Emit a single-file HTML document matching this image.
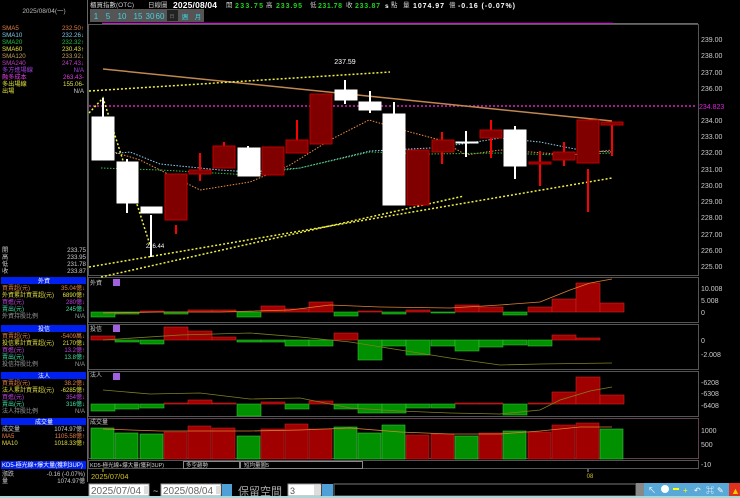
<!DOCTYPE html>
<html><head><meta charset="utf-8"><style>
html,body{margin:0;padding:0;background:#000;width:740px;height:498px;overflow:hidden}
svg{display:block}
text{font-family:"Liberation Sans","Noto Sans CJK TC",sans-serif}
</style></head><body>
<svg width="740" height="498" viewBox="0 0 740 498" xmlns="http://www.w3.org/2000/svg">
<rect width="740" height="498" fill="#000"/>
<!-- left panel -->
<line x1="87.5" y1="0" x2="87.5" y2="482" stroke="#666"/>
<text x="44" y="13" fill="#bbb" font-size="6.5" text-anchor="middle">2025/08/04(一)</text>
<g font-size="6.2">
<text x="2" y="30" fill="#e08040">SMA5</text><text x="84" y="30" fill="#e08040" text-anchor="end">232.50↑</text>
<text x="2" y="37" fill="#80c8e8">SMA10</text><text x="84" y="37" fill="#80c8e8" text-anchor="end">232.26↓</text>
<text x="2" y="44" fill="#20c040">SMA20</text><text x="84" y="44" fill="#20c040" text-anchor="end">232.32↑</text>
<text x="2" y="51" fill="#e0e040">SMA60</text><text x="84" y="51" fill="#e0e040" text-anchor="end">230.43↑</text>
<text x="2" y="58" fill="#c0a060">SMA120</text><text x="84" y="58" fill="#c0a060" text-anchor="end">233.92↓</text>
<text x="2" y="65" fill="#c040c0">SMA240</text><text x="84" y="65" fill="#c040c0" text-anchor="end">247.43↓</text>
<text x="2" y="72" fill="#a040e0">多方進場線</text><text x="84" y="72" fill="#a040e0" text-anchor="end">N/A</text>
<text x="2" y="79" fill="#e040e0">融多成本</text><text x="84" y="79" fill="#e040e0" text-anchor="end">263.43-</text>
<text x="2" y="86" fill="#e0e040">多出場線</text><text x="84" y="86" fill="#e0e040" text-anchor="end">155.06-</text>
<text x="2" y="93" fill="#e0e040">出場</text><text x="84" y="93" fill="#ccc" text-anchor="end">N/A</text>
<text x="2" y="252" fill="#ccc">開</text><text x="86" y="252" fill="#ccc" text-anchor="end">233.75</text>
<text x="2" y="259" fill="#ccc">高</text><text x="86" y="259" fill="#ccc" text-anchor="end">233.95</text>
<text x="2" y="266" fill="#ccc">低</text><text x="86" y="266" fill="#ccc" text-anchor="end">231.78</text>
<text x="2" y="273" fill="#ccc">收</text><text x="86" y="273" fill="#ccc" text-anchor="end">233.87</text>
</g>
<g font-size="6">
<rect x="1" y="277" width="85" height="7" fill="#0020f0"/><text x="44" y="283" fill="#fff" text-anchor="middle">外資</text>
<text x="2" y="290" fill="#e08040">買賣超(元)</text><text x="85" y="290" fill="#e08040" text-anchor="end">35.04億↓</text>
<text x="2" y="297" fill="#e0e040">外資累計買賣超(元)</text><text x="85" y="297" fill="#e0e040" text-anchor="end">6890億↑</text>
<text x="2" y="304" fill="#c040e0">買進(元)</text><text x="85" y="304" fill="#c040e0" text-anchor="end">280億↓</text>
<text x="2" y="311" fill="#40e0a0">賣出(元)</text><text x="85" y="311" fill="#40e0a0" text-anchor="end">245億↓</text>
<text x="2" y="318" fill="#999">外資持股比例</text><text x="85" y="318" fill="#999" text-anchor="end">N/A</text>
<rect x="1" y="325" width="85" height="7" fill="#0020f0"/><text x="44" y="331" fill="#fff" text-anchor="middle">投信</text>
<text x="2" y="338" fill="#e08040">買賣超(元)</text><text x="85" y="338" fill="#e08040" text-anchor="end">-5409萬↓</text>
<text x="2" y="345" fill="#e0e040">投信累計買賣超(元)</text><text x="85" y="345" fill="#e0e040" text-anchor="end">2170億↓</text>
<text x="2" y="352" fill="#c040e0">買進(元)</text><text x="85" y="352" fill="#c040e0" text-anchor="end">13.2億↑</text>
<text x="2" y="359" fill="#40e0a0">賣出(元)</text><text x="85" y="359" fill="#40e0a0" text-anchor="end">13.8億↑</text>
<text x="2" y="366" fill="#999">投信持股比例</text><text x="85" y="366" fill="#999" text-anchor="end">N/A</text>
<rect x="1" y="372" width="85" height="7" fill="#0020f0"/><text x="44" y="378" fill="#fff" text-anchor="middle">法人</text>
<text x="2" y="385" fill="#e08040">買賣超(元)</text><text x="85" y="385" fill="#e08040" text-anchor="end">38.2億↓</text>
<text x="2" y="392" fill="#e0e040">法人累計買賣超(元)</text><text x="85" y="392" fill="#e0e040" text-anchor="end">-6285億↑</text>
<text x="2" y="399" fill="#c040e0">買進(元)</text><text x="85" y="399" fill="#c040e0" text-anchor="end">354億↓</text>
<text x="2" y="406" fill="#40e0a0">賣出(元)</text><text x="85" y="406" fill="#40e0a0" text-anchor="end">316億↓</text>
<text x="2" y="413" fill="#999">法人持股比例</text><text x="85" y="413" fill="#999" text-anchor="end">N/A</text>
<rect x="1" y="418" width="85" height="7" fill="#0020f0"/><text x="44" y="424" fill="#fff" text-anchor="middle">成交量</text>
<text x="2" y="431" fill="#ccc">成交量</text><text x="85" y="431" fill="#ccc" text-anchor="end">1074.97億↓</text>
<text x="2" y="438" fill="#e08040">MA5</text><text x="85" y="438" fill="#e08040" text-anchor="end">1105.58億↑</text>
<text x="2" y="445" fill="#e0e040">MA10</text><text x="85" y="445" fill="#e0e040" text-anchor="end">1018.33億↑</text>
<rect x="1" y="461" width="85" height="8" fill="#0020f0"/><text x="2" y="467" fill="#fff">KD5-極光線+爆大量(獲利3UP)</text>
<text x="2" y="476" fill="#ccc">漲跌</text><text x="85" y="476" fill="#ccc" text-anchor="end">-0.16 (-0.07%)</text>
<text x="2" y="483" fill="#ccc">量</text><text x="85" y="483" fill="#ccc" text-anchor="end">1074.97億</text>
</g>
<!-- top bar -->
<g font-size="6.5">
<text x="90" y="7" fill="#ccc">櫃買指數(OTC)</text>
<text x="148" y="7" fill="#ccc">日線圖</text>
<text x="173" y="8" fill="#fff" font-weight="bold" font-size="8.5" textLength="44">2025/08/04</text>
<text x="226" y="7" fill="#ccc">開</text><text x="235" y="8" fill="#20d020" font-weight="bold" font-size="7" textLength="28">233.75</text>
<text x="266" y="7" fill="#ccc">高</text><text x="276" y="8" fill="#20d020" font-weight="bold" font-size="7" textLength="26">233.95</text>
<text x="310" y="7" fill="#ccc">低</text><text x="318" y="8" fill="#20d020" font-weight="bold" font-size="7" textLength="24">231.78</text>
<text x="346" y="7" fill="#ccc">收</text><text x="355" y="8" fill="#20d020" font-weight="bold" font-size="7" textLength="25">233.87</text>
<text x="385" y="8" fill="#fff" font-weight="bold" font-size="6.5">s</text>
<text x="391" y="7" fill="#ccc">點</text><text x="403" y="7" fill="#ccc">量</text>
<text x="413" y="8" fill="#fff" font-weight="bold" font-size="7" textLength="31">1074.97</text>
<text x="449" y="7" fill="#ccc">億</text>
<text x="458" y="8" fill="#fff" font-weight="bold" font-size="7" textLength="57">-0.16 (-0.07%)</text>
</g>
<rect x="90" y="9" width="114" height="13" fill="#555"/>
<g font-size="8" fill="#40d0e0" text-anchor="middle">
<text x="96" y="19">1</text><text x="108" y="19">5</text><text x="122" y="19">10</text><text x="138" y="19">15</text><text x="150" y="19">30</text><text x="160" y="19">60</text>
</g>
<rect x="167" y="10" width="11" height="11" fill="#222"/><text x="172" y="18" fill="#777" font-size="5" text-anchor="middle">日</text>
<text x="185" y="19" fill="#40d0e0" font-size="6.5" text-anchor="middle">週</text><text x="198" y="19" fill="#40d0e0" font-size="6.5" text-anchor="middle">月</text>
<line x1="102" y1="23.5" x2="613" y2="23.5" stroke="#c020c0" stroke-width="1.5"/>
<line x1="613" y1="23.5" x2="698" y2="23.5" stroke="#666"/>
<!-- frames -->
<g fill="none" stroke="#555">
<rect x="88.5" y="24.5" width="610" height="251"/>
<rect x="88.5" y="277.5" width="610" height="45"/>
<rect x="88.5" y="324.5" width="610" height="45"/>
<rect x="88.5" y="371.5" width="610" height="45"/>
<rect x="88.5" y="418.5" width="610" height="40" stroke="#604050"/>
<rect x="88.5" y="460.5" width="610" height="8"/>
</g>
<!-- right axis -->
<g font-size="7" fill="#ccc">
<text x="701" y="42">239.00</text><text x="701" y="58">238.00</text><text x="701" y="75">237.00</text><text x="701" y="91">236.00</text>
<text x="701" y="123">234.00</text><text x="701" y="139">233.00</text><text x="701" y="155">232.00</text><text x="701" y="172">231.00</text>
<text x="701" y="188">230.00</text><text x="701" y="204">229.00</text><text x="701" y="220">228.00</text><text x="701" y="237">227.00</text>
<text x="701" y="253">226.00</text><text x="701" y="269">225.00</text>
<text x="699" y="109" fill="#e020e0">234.823</text>
<text x="701" y="291">10.008</text><text x="701" y="303">5.008</text><text x="701" y="315">0</text>
<text x="701" y="343">0</text><text x="701" y="357">-2.008</text>
<text x="701" y="385">-6208</text><text x="701" y="396">-6308</text><text x="701" y="408">-6408</text>
<text x="701" y="433">1000</text><text x="701" y="447">500</text><text x="701" y="467">-10</text>
</g>
<!-- main chart lines -->
<line x1="89" y1="106" x2="697" y2="106" stroke="#e020c0" stroke-width="1.5" stroke-dasharray="2,2"/>
<line x1="103" y1="69" x2="612" y2="121" stroke="#c08850" stroke-width="1.5"/>
<g fill="none" stroke="#f0f040" stroke-width="1.5" stroke-dasharray="2,2">
<line x1="89" y1="91" x2="390" y2="72"/>
<line x1="89" y1="267" x2="612" y2="178"/>
<line x1="101" y1="277" x2="464" y2="196"/>
<polyline points="89,113 103,98 150,245"/>
</g>
<g fill="none" stroke-width="1" stroke-dasharray="1.5,1.5">
<polyline stroke="#f09040" points="101,148 140,160 200,190 250,182 290,165 330,140 369,120 410,132 440,140 466,155 500,150 530,152 570,155 612,150"/>
<polyline stroke="#90d0f0" points="101,155 130,152 160,164 220,170 250,172 300,168 370,151 430,148 470,143 500,138 540,142 580,150 612,152"/>
<polyline stroke="#30c040" points="101,168 160,170 250,175 300,168 370,152 430,154 500,153 560,155 612,153"/>
</g>
<!-- candles -->
<g stroke-width="2">
<line x1="103" y1="98" x2="103" y2="117" stroke="#fff"/>
<line x1="127" y1="159" x2="127" y2="213" stroke="#fff"/>
<line x1="151" y1="215" x2="151" y2="257" stroke="#fff"/>
<line x1="176" y1="225" x2="176" y2="234" stroke="#f00"/>
<line x1="200" y1="153" x2="200" y2="181" stroke="#f00"/>
<line x1="224" y1="142" x2="224" y2="149" stroke="#f00"/>
<line x1="248" y1="146" x2="248" y2="151" stroke="#fff"/>
<line x1="297" y1="120" x2="297" y2="142" stroke="#f00"/>
<line x1="345" y1="80" x2="345" y2="104" stroke="#fff"/>
<line x1="370" y1="91" x2="370" y2="113" stroke="#fff"/>
<line x1="394" y1="102" x2="394" y2="114" stroke="#fff"/>
<line x1="442" y1="132" x2="442" y2="164" stroke="#f00"/>
<line x1="466" y1="131" x2="466" y2="157" stroke="#fff"/>
<line x1="491" y1="120" x2="491" y2="158" stroke="#f00"/>
<line x1="515" y1="126" x2="515" y2="179" stroke="#fff"/>
<line x1="540" y1="151" x2="540" y2="186" stroke="#f00"/>
<line x1="564" y1="142" x2="564" y2="166" stroke="#f00"/>
<line x1="588" y1="169" x2="588" y2="212" stroke="#f00"/>
<line x1="612" y1="125" x2="612" y2="156" stroke="#f00"/>
</g>
<g stroke="#fff" fill="#fff">
<rect x="92" y="117" width="22" height="43"/>
<rect x="117" y="162" width="21" height="41"/>
<rect x="141" y="207" width="21" height="6"/>
<rect x="238" y="148" width="22" height="28"/>
<rect x="335" y="90" width="22" height="10"/>
<rect x="359" y="102" width="22" height="8"/>
<rect x="383" y="114" width="22" height="91"/>
<rect x="456" y="142" width="22" height="1"/>
<rect x="504" y="130" width="22" height="36"/>
</g>
<g fill="#800000" stroke="#c00000">
<rect x="165" y="174" width="22" height="46"/>
<rect x="189" y="170" width="22" height="4"/>
<rect x="213" y="146" width="22" height="22"/>
<rect x="262" y="147" width="22" height="28"/>
<rect x="286" y="140" width="22" height="13"/>
<rect x="310" y="94" width="22" height="50"/>
<rect x="407" y="150" width="22" height="55"/>
<rect x="432" y="140" width="22" height="12"/>
<rect x="480" y="130" width="22" height="8"/>
<rect x="529" y="162" width="22" height="2"/>
<rect x="553" y="152" width="22" height="8"/>
<rect x="577" y="120" width="22" height="43"/>
<rect x="601" y="122" width="22" height="3"/>
</g>
<text x="345" y="64" fill="#fff" font-size="7" text-anchor="middle">237.59</text>
<text x="155" y="248" fill="#fff" font-size="6" text-anchor="middle">226.44</text>
<!-- panel labels -->
<g font-size="6" fill="#ccc">
<text x="90" y="285">外資</text><rect x="113" y="279" width="7" height="7" fill="#a060e0"/>
<text x="90" y="331">投信</text><rect x="113" y="325" width="7" height="7" fill="#a060e0"/>
<text x="90" y="377">法人</text><rect x="113" y="373" width="7" height="7" fill="#a060e0"/>
<text x="90" y="424">成交量</text>
</g>
<g stroke-width="0.6">
<g fill="#009000" stroke="#30c030">
<rect x="91" y="312" width="24" height="5"/><rect x="115" y="312" width="24" height="2"/><rect x="164" y="312" width="24" height="2"/>
<rect x="237" y="312" width="24" height="5"/><rect x="334" y="312" width="24" height="4"/><rect x="382" y="312" width="24" height="2"/>
<rect x="431" y="312" width="24" height="1"/><rect x="503" y="312" width="24" height="3"/>
</g>
<g fill="#a00000" stroke="#d02020">
<rect x="140" y="311" width="24" height="1"/><rect x="188" y="310" width="24" height="2"/><rect x="212" y="310" width="24" height="2"/>
<rect x="261" y="306" width="24" height="6"/><rect x="285" y="309" width="24" height="3"/><rect x="309" y="302" width="24" height="10"/>
<rect x="358" y="311" width="24" height="1"/><rect x="406" y="310" width="24" height="2"/><rect x="455" y="305" width="24" height="7"/>
<rect x="479" y="307" width="24" height="5"/><rect x="528" y="307" width="24" height="5"/><rect x="552" y="299" width="24" height="13"/>
<rect x="576" y="283" width="24" height="29"/><rect x="600" y="303" width="24" height="9"/>
</g>
<g fill="#009000" stroke="#30c030">
<rect x="115" y="340" width="24" height="2"/><rect x="140" y="340" width="24" height="4"/><rect x="237" y="340" width="24" height="2"/>
<rect x="261" y="340" width="24" height="2"/><rect x="285" y="340" width="24" height="6"/><rect x="309" y="340" width="24" height="6"/>
<rect x="358" y="340" width="24" height="20"/><rect x="382" y="340" width="24" height="6"/><rect x="406" y="340" width="24" height="15"/>
<rect x="431" y="340" width="24" height="6"/><rect x="455" y="340" width="24" height="11"/><rect x="479" y="340" width="24" height="7"/>
<rect x="503" y="340" width="24" height="5"/><rect x="528" y="340" width="24" height="6"/>
</g>
<g fill="#a00000" stroke="#d02020">
<rect x="91" y="336" width="24" height="4"/><rect x="164" y="327" width="24" height="13"/><rect x="188" y="331" width="24" height="9"/>
<rect x="212" y="337" width="24" height="3"/><rect x="334" y="333" width="24" height="7"/><rect x="552" y="335" width="24" height="5"/>
<rect x="576" y="338" width="24" height="2"/>
</g>
<g fill="#009000" stroke="#30c030">
<rect x="91" y="404" width="24" height="7"/><rect x="115" y="404" width="24" height="5"/><rect x="140" y="404" width="24" height="4"/>
<rect x="237" y="404" width="24" height="12"/><rect x="285" y="404" width="24" height="5"/><rect x="334" y="404" width="24" height="5"/>
<rect x="358" y="404" width="24" height="9"/><rect x="382" y="404" width="24" height="9"/><rect x="406" y="404" width="24" height="4"/>
<rect x="431" y="404" width="24" height="4"/><rect x="503" y="404" width="24" height="11"/>
</g>
<g fill="#a00000" stroke="#d02020">
<rect x="164" y="403" width="24" height="1"/><rect x="188" y="400" width="24" height="4"/><rect x="212" y="403" width="24" height="1"/>
<rect x="261" y="402" width="24" height="2"/><rect x="309" y="401" width="24" height="3"/><rect x="455" y="403" width="24" height="1"/>
<rect x="479" y="403" width="24" height="1"/><rect x="528" y="403" width="24" height="1"/><rect x="552" y="392" width="24" height="12"/>
<rect x="576" y="377" width="24" height="27"/><rect x="600" y="395" width="24" height="9"/>
</g>
<g fill="#009000" stroke="#40c040">
<rect x="91" y="428" width="23" height="31"/><rect x="115" y="433" width="23" height="26"/><rect x="140" y="434" width="23" height="25"/>
<rect x="237" y="436" width="23" height="23"/><rect x="334" y="427" width="23" height="32"/><rect x="358" y="433" width="23" height="26"/>
<rect x="382" y="425" width="23" height="34"/><rect x="455" y="436" width="23" height="23"/><rect x="503" y="431" width="23" height="28"/>
<rect x="600" y="429" width="23" height="30"/>
</g>
<g fill="#a00000" stroke="#c02020">
<rect x="164" y="432" width="23" height="27"/><rect x="188" y="426" width="23" height="33"/><rect x="212" y="428" width="23" height="31"/>
<rect x="261" y="429" width="23" height="30"/><rect x="285" y="424" width="23" height="35"/><rect x="309" y="429" width="23" height="30"/>
<rect x="406" y="435" width="23" height="24"/><rect x="431" y="434" width="23" height="25"/><rect x="479" y="433" width="23" height="26"/>
<rect x="528" y="432" width="23" height="27"/><rect x="552" y="425" width="23" height="34"/><rect x="576" y="423" width="23" height="36"/>
</g>
</g>
<g fill="none" stroke-width="0.8">
<polyline stroke="#e08030" points="103,313 160,312 220,312 290,310 330,305 380,307 450,308 500,305 540,302 570,290 590,283 612,279"/>
<polyline stroke="#808020" points="103,340 180,335 250,333 300,337 350,342 400,350 450,358 500,365 540,364 612,363"/>
<polyline stroke="#808020" points="103,390 150,394 200,393 250,399 300,398 350,408 400,411 450,413 500,414 540,410 560,400 590,391 612,387"/>
<polyline stroke="#e08030" points="103,429 160,431 250,431 300,430 350,428 400,432 450,434 500,434 540,431 580,427 612,427"/>
</g>
<g font-size="5.5" fill="#ccc">
<text x="90" y="467">KD5-極光線+爆大量(獲利3UP)</text>
<rect x="183.5" y="461.5" width="56" height="7" fill="none" stroke="#888"/><text x="186" y="467">多空趨勢</text>
<rect x="240.5" y="461.5" width="122" height="7" fill="none" stroke="#888"/><text x="244" y="467">短均量圖5</text>
</g>
<text x="91" y="479" fill="#d0c020" font-size="7.5">2025/07/04</text>
<text x="590" y="478" fill="#d0c020" font-size="6" text-anchor="middle">08</text>
<line x1="103" y1="469" x2="103" y2="472" stroke="#d0c020"/><line x1="588" y1="469" x2="588" y2="472" stroke="#aaa"/>
<rect x="89" y="484" width="60" height="12" fill="#fff" stroke="#999"/>
<text x="91" y="494" fill="#666" font-size="10">2025/07/04</text>
<rect x="144" y="486" width="5" height="8" fill="#ddd"/>
<text x="153" y="494" fill="#ccc" font-size="9">~</text>
<rect x="161" y="484" width="60" height="12" fill="#fff" stroke="#999"/>
<text x="163" y="494" fill="#666" font-size="10">2025/08/04</text>
<rect x="216" y="486" width="5" height="8" fill="#ddd"/>
<rect x="222" y="484" width="10" height="12" fill="#50a0d8"/>
<text x="238" y="495" fill="#aaa" font-size="11">保留空間</text>
<rect x="288" y="484" width="33" height="12" fill="#fff" stroke="#999"/>
<text x="290" y="494" fill="#555" font-size="9">3</text>
<rect x="314" y="485" width="7" height="10" fill="#ddd"/>
<rect x="322" y="484" width="11" height="12" fill="#50a0d8"/>
<rect x="334" y="484" width="302" height="12" fill="#000" stroke="#777"/>
<rect x="636" y="483" width="104" height="13" fill="#5aa8d8"/>
<rect x="636" y="483" width="8" height="13" fill="#888"/>
<g fill="#fff" font-size="8">
<text x="648" y="493">↖</text><circle cx="665" cy="489" r="4"/><rect x="673" y="488" width="6" height="2" fill="#ff0"/>
<text x="683" y="493" fill="#ff0">+</text><text x="694" y="493">↶</text><text x="706" y="493">⌘</text><text x="717" y="493">✎</text>
</g>
<rect x="729" y="483" width="11" height="13" fill="#e03020"/><text x="731" y="494" fill="#ffcc00" font-size="9">▲</text>
<rect x="0" y="496" width="740" height="2" fill="#a8d8d8"/>
</svg>
</body></html>
